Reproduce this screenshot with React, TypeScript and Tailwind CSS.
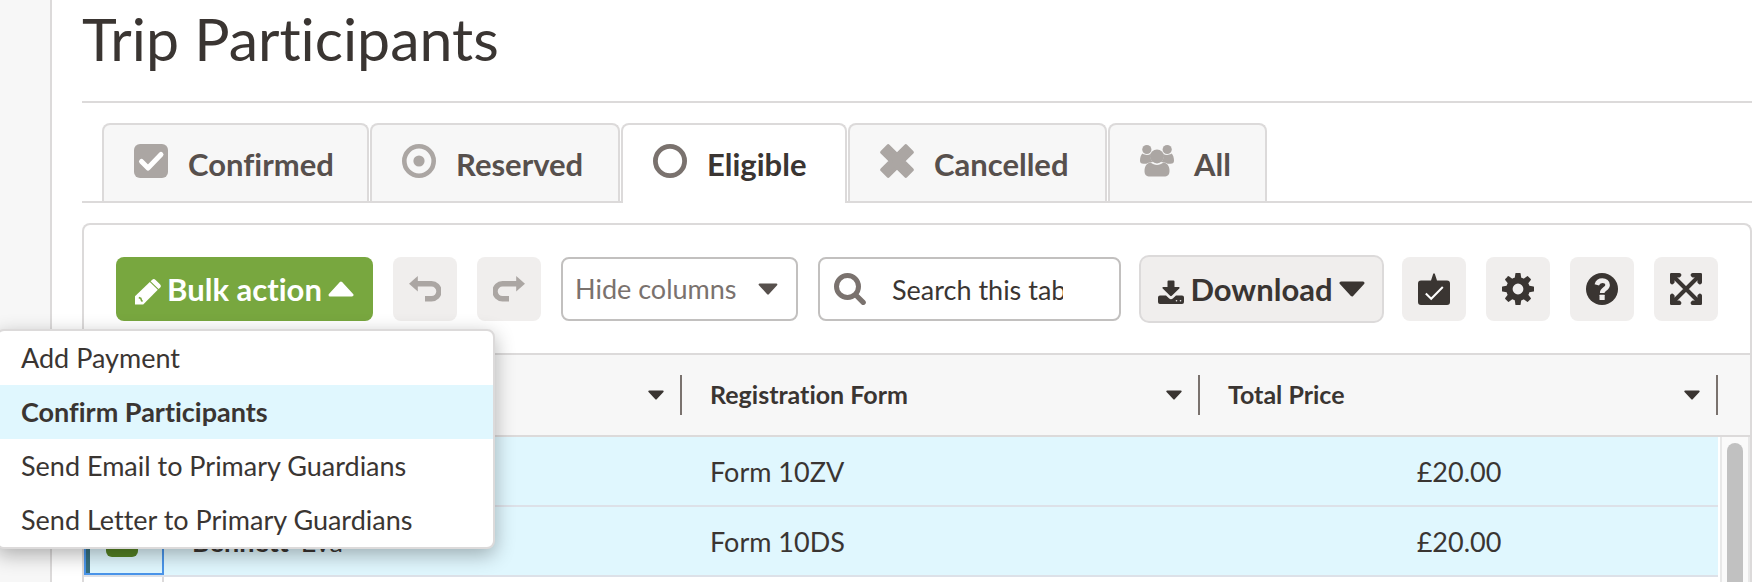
import type { ReactNode } from 'react'
import clsx from 'clsx'

type IconProps = { className?: string }

function Caret({ className, up = false }: IconProps & { up?: boolean }) {
  return (
    <svg viewBox="0 0 26 16" fill="currentColor" stroke="currentColor" strokeWidth="3" strokeLinejoin="round" className={className} aria-hidden="true">
      <path d={up ? 'M13 2 24 14H2z' : 'M2 2h22L13 14z'} />
    </svg>
  )
}

function CheckSquareIcon() {
  return (
    <svg viewBox="0 0 34 34" className="size-[34px]" aria-hidden="true">
      <rect width="34" height="34" rx="6" fill="currentColor" />
      <path d="M7.5 17.5l6.500 6.500L27 10.500" fill="none" stroke="#fff" strokeWidth="5" strokeLinejoin="round" strokeLinecap="round" />
    </svg>
  )
}

function TargetIcon() {
  return (
    <svg viewBox="0 0 34 34" className="size-[34px]" aria-hidden="true">
      <circle cx="17" cy="17" r="14.7" fill="none" stroke="currentColor" strokeWidth="4.6" />
      <circle cx="17" cy="17" r="5.6" fill="currentColor" />
    </svg>
  )
}

function RingIcon() {
  return (
    <svg viewBox="0 0 34 34" className="size-[34px] text-[#7a726e]" aria-hidden="true">
      <circle cx="17" cy="17" r="14.6" fill="none" stroke="currentColor" strokeWidth="4.8" />
    </svg>
  )
}

function CrossIcon() {
  return (
    <svg viewBox="0 0 34 34" className="size-[34px]" aria-hidden="true">
      <path d="M7.500 7.500l19 19M26.500 7.500l-19 19" stroke="currentColor" strokeWidth="10" />
      <path
        d="M8.200 2L17 10.800 25.800 2 32 8.200 23.200 17l8.800 8.800-6.200 6.200L17 23.200 8.200 32 2 25.800 10.800 17 2 8.200z"
        fill="currentColor"
        stroke="currentColor"
        strokeWidth="3.600"
        strokeLinejoin="round"
      />
    </svg>
  )
}

function GroupIcon() {
  return (
    <svg viewBox="0 0 34 34" className="size-[34px]" fill="currentColor" aria-hidden="true">
      <circle cx="6.800" cy="5.500" r="4.600" />
      <circle cx="27.200" cy="5.500" r="4.600" />
      <path d="M2.500 9.500c3 2 6 1.800 8.400.2-1.300 3.800.2 6.600 2 8.300-2.500.1-4.500.6-6.500 1.800H3.500C1 19.800 0 18.600 0 16.500c0-2.800.8-5.600 2.500-7z" />
      <path d="M31.500 9.500c-3 2-6 1.800-8.400.2 1.300 3.800-.2 6.600-2 8.300 2.500.1 4.500.6 6.500 1.800h2.900c2.500 0 3.500-1.200 3.500-3.300 0-2.800-.8-5.600-2.500-7z" />
      <circle cx="17" cy="12.400" r="7" />
      <path d="M10.500 18.500c4 3.200 9 3.200 13 0 4 .5 6 4 6 8.500 0 3.800-2 5.600-5.500 5.600H10c-3.500 0-5.500-1.800-5.500-5.600 0-4.500 2-8 6-8.500z" />
    </svg>
  )
}

function PencilIcon() {
  return (
    <svg viewBox="0 0 26 26" className="mt-1.5 size-[26px]" aria-hidden="true">
      <path d="M0 25.500v-8.300L14.800 3l8 7.800L8.200 25.500z" fill="currentColor" />
      <path d="M15.600 2.200l1.400-1.300a2.600 2.600 0 0 1 3.600 0l4.400 4.300a2.600 2.600 0 0 1 0 3.600L23.600 10z" fill="currentColor" />
      <path d="M3.800 18.600l2 .8.800 2.400 1 .6" fill="none" stroke="#78a73f" strokeWidth="1.600" />
    </svg>
  )
}

function TurnIcon({ className }: IconProps) {
  return (
    <svg viewBox="0 0 32 26" className={clsx('h-[26px] w-8', className)} aria-hidden="true">
      <path d="M0 7.800L8.800 0v15.600z" fill="currentColor" />
      <path d="M8 7.800h14.500a7.500 7.500 0 0 1 0 15H16" fill="none" stroke="currentColor" strokeWidth="5.400" />
    </svg>
  )
}

function SearchIcon() {
  return (
    <svg viewBox="0 0 32 32" className="size-8 shrink-0 text-[#7a726e]" fill="none" stroke="currentColor" aria-hidden="true">
      <circle cx="13.500" cy="13.500" r="11" strokeWidth="5" />
      <path d="M21.800 22l7.400 7.400" strokeWidth="5.200" strokeLinecap="round" />
    </svg>
  )
}

function DownloadIcon() {
  return (
    <svg viewBox="0 0 26 24" className="mt-1.5 h-6 w-[26px]" fill="currentColor" aria-hidden="true">
      <path d="M9.500 1.500a1 1 0 0 1 1-1h5a1 1 0 0 1 1 1V7h4.300c.8 0 1.100.8.500 1.400l-7.500 7.400a1.200 1.200 0 0 1-1.700 0L4.700 8.400C4.100 7.800 4.400 7 5.200 7h4.300z" />
      <path d="M2 15.500h6l2.900 2.700a3.100 3.100 0 0 0 4.200 0l2.900-2.700H24a2 2 0 0 1 2 2V22a2 2 0 0 1-2 2H2a2 2 0 0 1-2-2v-4.500a2 2 0 0 1 2-2z" />
      <circle cx="18.500" cy="20.800" r="0.800" fill="#f0eeed" />
      <circle cx="22.500" cy="20.800" r="0.800" fill="#f0eeed" />
    </svg>
  )
}

function BadgeIcon() {
  return (
    <svg viewBox="0 0 32 32" className="size-8" aria-hidden="true">
      <path d="M3 7.500h10L15.300.5h1.400L19 7.500h10a3 3 0 0 1 3 3V29a3 3 0 0 1-3 3H3a3 3 0 0 1-3-3V10.500a3 3 0 0 1 3-3z" fill="currentColor" />
      <path d="M7.800 20.500l5.400 5.300L24.800 14" fill="none" stroke="#fff" strokeWidth="2" />
    </svg>
  )
}

function GearIcon() {
  return (
    <svg viewBox="0 0 32 32" className="size-8" aria-hidden="true">
      <circle cx="16" cy="16" r="8.600" fill="none" stroke="currentColor" strokeWidth="6.400" />
      {[0, 45, 90, 135, 180, 225, 270, 315].map((angle) => (
        <path key={angle} d="M12.600 6l.8-5.500q.1-.5.600-.5h4q.5 0 .6.500l.8 5.500z" fill="currentColor" transform={`rotate(${angle} 16 16)`} />
      ))}
    </svg>
  )
}

function HelpIcon() {
  return (
    <svg viewBox="0 0 32 32" className="size-8" aria-hidden="true">
      <circle cx="16" cy="16" r="16" fill="currentColor" />
      <path d="M10.800 11.800c.8-2.800 2.800-4.200 5.600-4.200 3 0 5.200 1.800 5.200 4.400 0 4-5.400 3.800-5.400 8" fill="none" stroke="#f0eeed" strokeWidth="4.600" />
      <rect x="13.500" y="21.800" width="5.200" height="5.200" rx="0.500" fill="#f0eeed" />
    </svg>
  )
}

function ExpandIcon() {
  return (
    <svg viewBox="0 0 32 32" className="size-8" aria-hidden="true">
      <path d="M4 4l24 24M28 4L4 28" stroke="currentColor" strokeWidth="4" />
      {[0, 90, 180, 270].map((angle) => (
        <path
          key={angle}
          d="M1.200 0h8.300a2 2 0 0 1 1.200 3.500L9.500 4.600H7.200L4.600 7.200v2.300l-1.100 1.200A2 2 0 0 1 0 9.500V1.200A1.200 1.200 0 0 1 1.200 0z"
          fill="currentColor"
          transform={`rotate(${angle} 16 16)`}
        />
      ))}
    </svg>
  )
}

const tabs = [
  { label: 'Confirmed', icon: <CheckSquareIcon />, width: 'w-[267px]' },
  { label: 'Reserved', icon: <TargetIcon />, width: 'w-[250px]' },
  { label: 'Eligible', icon: <RingIcon />, width: 'w-[226px]', active: true },
  { label: 'Cancelled', icon: <CrossIcon />, width: 'w-[259px]' },
  { label: 'All', icon: <GroupIcon />, width: 'w-[159px]' },
]

const bulkActions = [
  { label: 'Add Payment' },
  { label: 'Confirm Participants', active: true },
  { label: 'Send Email to Primary Guardians' },
  { label: 'Send Letter to Primary Guardians' },
]

const rows = [
  { id: 1, surname: '', forename: '', form: 'Form 10ZV', price: '£20.00', focused: false },
  { id: 2, surname: 'Bennett', forename: 'Eva', form: 'Form 10DS', price: '£20.00', focused: true },
]

function IconButton({ label, disabled, children }: { label: string; disabled?: boolean; children: ReactNode }) {
  return (
    <button
      type="button"
      aria-label={label}
      disabled={disabled}
      className={clsx('flex size-16 shrink-0 items-center justify-center rounded-lg bg-[#f0eeed]', disabled && 'text-[#aba6a3]')}
    >
      {children}
    </button>
  )
}

function HeaderCell({ children }: { children?: ReactNode }) {
  return (
    <th scope="col" className="border-y-2 border-[#dcdada] p-0 text-left">
      <div className="flex h-20 items-center pl-7 text-[25px] font-bold">
        <span className="flex-1">{children}</span>
        <Caret className="mr-4 h-[10px] w-4" />
        <span className="h-10 w-0.5 bg-[#7a726e]" />
      </div>
    </th>
  )
}

function BulkMenu() {
  return (
    <ul
      role="menu"
      className="absolute top-full right-[-122px] z-10 mt-2 w-[499px] overflow-hidden rounded-lg border-2 border-[#dcdada] bg-white text-[27px] shadow-[0_6px_20px_rgba(0,0,0,0.3)]"
    >
      {bulkActions.map((action) => (
        <li key={action.label} role="none">
          <button
            type="button"
            role="menuitem"
            className={clsx('h-[54px] w-full px-[23px] text-left', action.active && 'bg-[#e0f7fe] font-bold')}
          >
            {action.label}
          </button>
        </li>
      ))}
    </ul>
  )
}

function Toolbar() {
  return (
    <div className="flex items-center gap-5 p-8">
      <div className="relative shrink-0">
        <button
          type="button"
          aria-haspopup="menu"
          aria-expanded="true"
          className="flex h-16 w-[257px] items-center justify-center gap-1.5 rounded-lg bg-[#78a73f] text-[31px] font-bold text-white"
        >
          <PencilIcon />
          Bulk action
          <Caret up className="h-4 w-[26px]" />
        </button>
        <BulkMenu />
      </div>
      <IconButton label="Undo" disabled>
        <TurnIcon />
      </IconButton>
      <IconButton label="Redo" disabled>
        <TurnIcon className="-scale-x-100" />
      </IconButton>
      <div className="relative shrink-0">
        <select
          aria-label="Hide columns"
          className="h-16 w-[237px] appearance-none rounded-lg border-2 border-[#c2c0bf] bg-white pl-3 text-[27px] text-[#7a726e]"
        >
          <option>Hide columns</option>
        </select>
        <Caret className="pointer-events-none absolute top-[26px] right-[19px] h-3 w-[22px] text-[#57504d]" />
      </div>
      <label className="flex h-16 min-w-[200px] flex-1 items-center gap-[26px] rounded-lg border-2 border-[#c2c0bf] pr-14 pl-[14px]">
        <SearchIcon />
        <input
          type="text"
          aria-label="Search"
          placeholder="Search this table"
          className="w-full min-w-0 pt-0.5 text-[27px] outline-none placeholder:text-[#3a3532]"
        />
      </label>
      <button
        type="button"
        className="flex h-16 w-[241px] shrink-0 items-center justify-center gap-1.5 rounded-lg bg-[#f0eeed] text-[31px] font-bold ring-2 ring-[#dcdada]"
      >
        <DownloadIcon />
        Download
        <Caret className="h-4 w-[26px]" />
      </button>
      <IconButton label="Mark attendance">
        <BadgeIcon />
      </IconButton>
      <IconButton label="Settings">
        <GearIcon />
      </IconButton>
      <IconButton label="Help">
        <HelpIcon />
      </IconButton>
      <IconButton label="Full screen">
        <ExpandIcon />
      </IconButton>
    </div>
  )
}

function ParticipantsTable() {
  return (
    <table className="w-full table-fixed border-separate border-spacing-0 text-[27px]">
      <colgroup>
        <col className="w-20" />
        <col />
        <col />
        <col />
        <col className="w-8" />
      </colgroup>
      <thead className="bg-[#f7f7f7]">
        <tr>
          <td className="border-y-2 border-[#dcdada]" />
          <HeaderCell />
          <HeaderCell>Registration Form</HeaderCell>
          <HeaderCell>Total Price</HeaderCell>
          <td className="border-y-2 border-[#dcdada]" />
        </tr>
      </thead>
      <tbody>
        {rows.map((row, index) => (
          <tr key={row.id} className="bg-[#e0f7fe]">
            <td className="border-b-2 border-[#dde1e8] p-0">
              <div className={clsx('flex h-[68px] border-2', row.focused ? 'border-[#4a95ea]' : 'border-transparent')}>
                <span className="w-1 bg-[#38707f]" />
                <span className="flex flex-1 items-center pl-4">
                  <input
                    type="checkbox"
                    defaultChecked
                    aria-label={`Select row ${row.id}`}
                    className="size-8 appearance-none rounded-md bg-[#568224]"
                  />
                </span>
              </div>
            </td>
            <td className="border-b-2 border-[#dde1e8] p-0 pt-0.5 pl-7">
              <strong className="mr-3">{row.surname}</strong>
              {row.forename}
            </td>
            <td className="border-b-2 border-[#dde1e8] p-0 pt-0.5 pl-7">{row.form}</td>
            <td className="border-b-2 border-[#dde1e8] p-0 pt-0.5 text-center">{row.price}</td>
            {index === 0 && (
              <td rowSpan={3} className="bg-white p-0 pl-0.5 align-top">
                <div className="flex h-[208px] justify-center border-x-2 border-[#e8e8e8] bg-[#fafafa] pt-1.5">
                  <span className="w-4 rounded-t-lg bg-[#c1c1c1]" />
                </div>
              </td>
            )}
          </tr>
        ))}
        <tr>
          <td className="h-[68px] border-r-2 border-[#dcdada]" />
          <td />
          <td />
          <td />
        </tr>
      </tbody>
    </table>
  )
}

export default function App() {
  return (
    <div className="flex h-screen overflow-hidden bg-white font-['Lato',sans-serif] text-[#3a3532] [font-variant-ligatures:none]">
      <aside className="w-[52px] shrink-0 border-r-2 border-[#dcdada] bg-[#f7f7f7]" />
      <main className="min-w-0 flex-1 pr-3 pl-[30px]">
        <h1 className="border-b-2 border-[#dcdada] pt-[3px] pb-[26px] text-[59px] leading-[72px]">Trip Participants</h1>

        <nav className="mt-5 flex gap-px border-b-2 border-[#dcdada] pl-5">
          {tabs.map((tab) => (
            <a
              key={tab.label}
              href="#"
              aria-current={tab.active ? 'page' : undefined}
              className={clsx(
                'flex items-center gap-5 rounded-t-lg border-2 border-b-0 border-[#dcdada] pl-[30px] text-[31px] font-bold',
                tab.width,
                tab.active ? '-mb-0.5 h-20 bg-white pb-0.5' : 'h-[78px] bg-[#f7f7f7] text-[#57504d]',
              )}
            >
              <span className={clsx('pb-1', !tab.active && 'text-[#aba6a3]')}>{tab.icon}</span>
              <span className="pt-0.5">{tab.label}</span>
            </a>
          ))}
        </nav>

        <section className="mt-5 rounded-t-lg border-2 border-b-0 border-[#dcdada]">
          <Toolbar />
          <ParticipantsTable />
        </section>
      </main>
    </div>
  )
}
